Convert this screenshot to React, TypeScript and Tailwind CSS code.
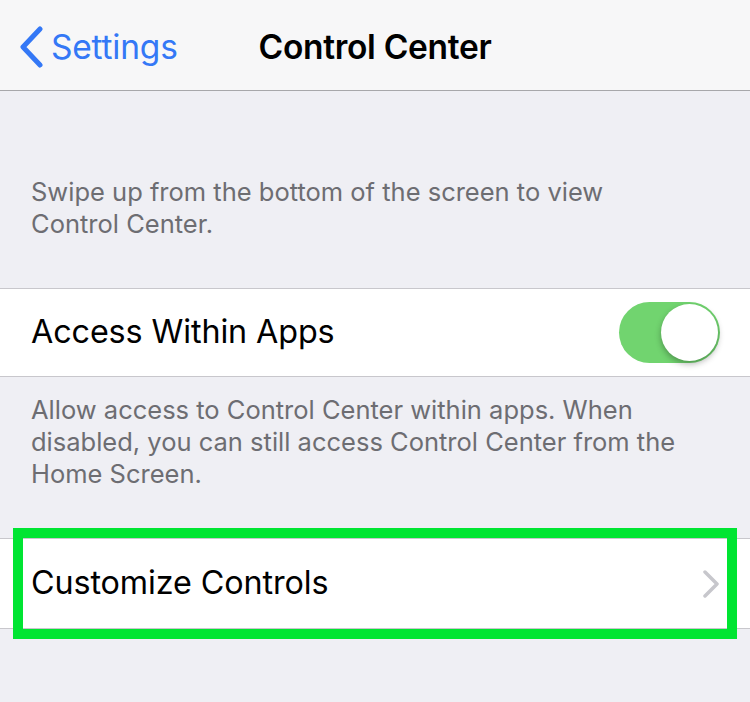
import React from "react";

export default function App() {
  const font = { fontFamily: "Inter, 'Noto Sans', sans-serif" };
  return (
    <div className="w-[750px] h-[702px] bg-[#efeff4] overflow-hidden" style={font}>
      {/* Nav bar */}
      <div className="h-[91px] bg-[#f7f7f8] border-b border-[#a7a7aa] flex items-center relative">
        <div className="flex items-center pl-[18px] pt-[4px] text-[#3478f6]">
          <svg width="26" height="42" viewBox="0 0 26 42">
            <path d="M22 3 L5 21 L22 39" fill="none" stroke="#3478f6" strokeWidth="5" strokeLinecap="round" strokeLinejoin="round" />
          </svg>
          <span className="ml-[7px] text-[33.5px] tracking-[-0.2px]">Settings</span>
        </div>
        <div className="absolute left-0 right-0 top-0 h-[90px] pt-[4px] flex items-center justify-center pointer-events-none">
          <span className="text-[33.5px] font-semibold text-black tracking-[-0.3px]">Control Center</span>
        </div>
      </div>

      {/* Header text */}
      <div className="pt-[85px] pb-[48px] px-[31px] text-[25.5px] leading-[32px] text-[#6d6d72]">
        Swipe up from the bottom of the screen to view
        <br />
        Control Center.
      </div>

      {/* Access Within Apps */}
      <div className="bg-white border-y border-[#c8c7cc] h-[89px] flex items-center justify-between pl-[31px] pr-[30px]">
        <span className="text-[32.3px] text-black tracking-[-0.1px]">Access Within Apps</span>
        <div className="w-[101px] h-[61px] rounded-full bg-[#71d46f] relative">
          <div className="absolute right-[2px] top-[2px] w-[57px] h-[57px] rounded-full bg-white shadow-[0_3px_6px_rgba(0,0,0,0.3)]" />
        </div>
      </div>

      {/* Footer text */}
      <div className="pt-[17px] pb-[48px] px-[31px] text-[25.5px] leading-[32px] text-[#6d6d72]">
        Allow access to Control Center within apps. When
        <br />
        disabled, you can still access Control Center from the
        <br />
        Home Screen.
      </div>

      {/* Customize Controls */}
      <div className="relative bg-white border-y border-[#c8c7cc] h-[91px] flex items-center justify-between pl-[31px] pr-[30px]">
        <span className="text-[32.3px] text-black tracking-[-0.1px]">Customize Controls</span>
        <svg width="18" height="28" viewBox="0 0 18 28">
          <path d="M3 2 L15 14 L3 26" fill="none" stroke="#c7c7cc" strokeWidth="3.5" strokeLinecap="round" strokeLinejoin="round" />
        </svg>
        <div className="absolute left-[13px] right-[13px] top-[-11px] bottom-[-11px] border-[10px] border-[#00e532] pointer-events-none" />
      </div>
    </div>
  );
}
